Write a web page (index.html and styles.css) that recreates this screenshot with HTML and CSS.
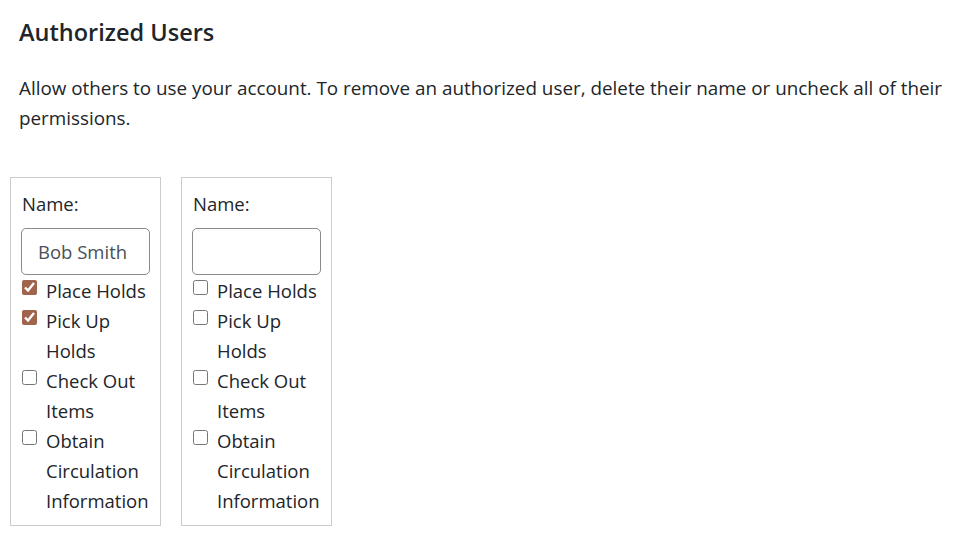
FILE: index.html
```html
<!DOCTYPE html>
<html lang="en">
<head>
<meta charset="utf-8">
<title>Authorized Users</title>
<link rel="stylesheet" href="styles.css">
</head>
<body>
<div class="page">
  <h2 class="title">Authorized Users</h2>
  <p class="intro">Allow others to use your account. To remove an authorized user, delete their name or uncheck all of their permissions.</p>
  <div class="users">
    <div class="user-card">
      <label class="name-label" for="u1">Name:</label>
      <input class="name-input" id="u1" type="text" value="Bob Smith">
      <label class="perm"><input type="checkbox" checked><span>Place Holds</span></label>
      <label class="perm"><input type="checkbox" checked><span>Pick Up Holds</span></label>
      <label class="perm"><input type="checkbox"><span>Check Out Items</span></label>
      <label class="perm"><input type="checkbox"><span>Obtain Circulation Information</span></label>
    </div>
    <div class="user-card">
      <label class="name-label" for="u2">Name:</label>
      <input class="name-input" id="u2" type="text" value="">
      <label class="perm"><input type="checkbox"><span>Place Holds</span></label>
      <label class="perm"><input type="checkbox"><span>Pick Up Holds</span></label>
      <label class="perm"><input type="checkbox"><span>Check Out Items</span></label>
      <label class="perm"><input type="checkbox"><span>Obtain Circulation Information</span></label>
    </div>
  </div>
</div>
</body>
</html>
```

FILE: styles.css
```css
html, body {
  margin: 0;
  padding: 0;
  background: #fff;
}
body {
  font-family: "Open Sans", "Noto Sans", sans-serif;
  color: #212529;
  font-size: 18.5px;
  line-height: 30px;
}
.page {
  padding: 18px 4px 0 19px;
}
.title {
  margin: 0;
  font-size: 23.5px;
  font-weight: 600;
  line-height: 29px;
}
.intro {
  margin: 26px 0 0;
  font-size: 18.85px;
}
.users {
  display: flex;
  gap: 20px;
  margin: 44px 0 0 -9px;
  align-items: flex-start;
}
.user-card {
  display: flex;
  flex-direction: column;
  width: 129px;
  padding: 11px 10px 9px 10px;
  border: 1px solid #ccc;
}
.name-label {
  display: block;
  padding-left: 1px;
  margin-bottom: 9px;
}
.name-input {
  box-sizing: border-box;
  width: 129px;
  height: 47px;
  margin: 0 0 1px;
  padding: 0 0 0 16px;
  border: 1px solid #8a8a8a;
  border-radius: 5px;
  font-family: inherit;
  font-size: 18.5px;
  color: #495057;
  background: #fff;
}
.perm {
  display: flex;
  align-items: flex-start;
}
.perm input {
  flex: none;
  width: 15px;
  height: 15px;
  margin: 4px 9px 0 1px;
  accent-color: #a0644c;
}
.perm span {
  flex: 1;
}
```
